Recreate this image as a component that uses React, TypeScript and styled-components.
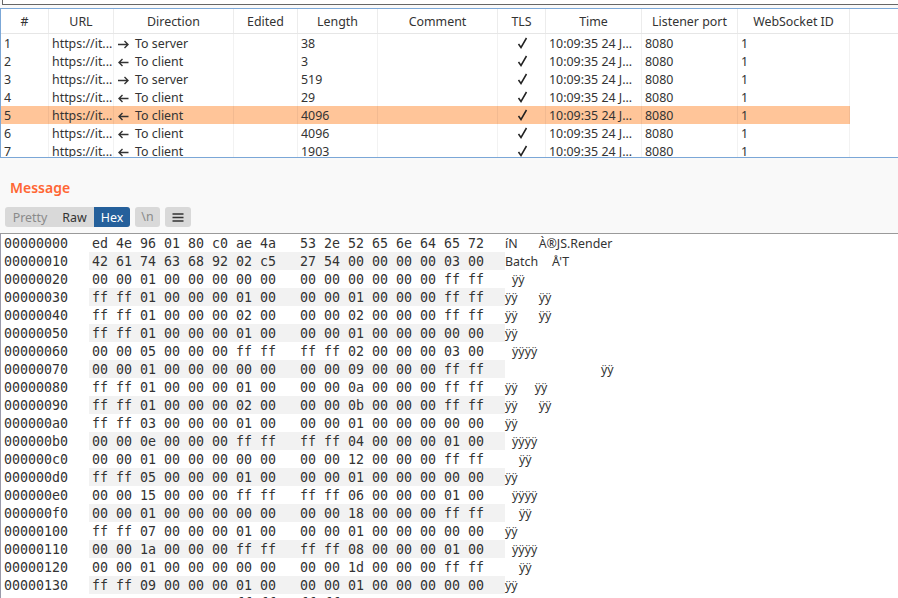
import React from "react";
import styled, { createGlobalStyle } from "styled-components";

const GlobalStyle = createGlobalStyle`
  html, body {
    margin: 0;
    padding: 0;
    background: #ffffff;
    overflow: hidden;
  }
`;

const columns = [
  { title: "#", width: 48 },
  { title: "URL", width: 65 },
  { title: "Direction", width: 120 },
  { title: "Edited", width: 64 },
  { title: "Length", width: 80 },
  { title: "Comment", width: 120 },
  { title: "TLS", width: 48 },
  { title: "Time", width: 96 },
  { title: "Listener port", width: 96 },
  { title: "WebSocket ID", width: 112 },
];

const messages = [
  { id: 1, out: true, length: 38 },
  { id: 2, out: false, length: 3 },
  { id: 3, out: true, length: 519 },
  { id: 4, out: false, length: 29 },
  { id: 5, out: false, length: 4096 },
  { id: 6, out: false, length: 4096 },
  { id: 7, out: false, length: 1903 },
];

// ascii column: [gap before the run in px, text]
type Run = [number, string];

const hexRows: [string, string, string, Run[]][] = [
  ["00000000", "ed 4e 96 01 80 c0 ae 4a", "53 2e 52 65 6e 64 65 72", [[0, "íN"], [21, "À®JS.Render"]]],
  ["00000010", "42 61 74 63 68 92 02 c5", "27 54 00 00 00 00 03 00", [[0, "Batch"], [14, "Å'T"]]],
  ["00000020", "00 00 01 00 00 00 00 00", "00 00 00 00 00 00 ff ff", [[7, "ÿÿ"]]],
  ["00000030", "ff ff 01 00 00 00 01 00", "00 00 01 00 00 00 ff ff", [[0, "ÿÿ"], [21, "ÿÿ"]]],
  ["00000040", "ff ff 01 00 00 00 02 00", "00 00 02 00 00 00 ff ff", [[0, "ÿÿ"], [21, "ÿÿ"]]],
  ["00000050", "ff ff 01 00 00 00 01 00", "00 00 01 00 00 00 00 00", [[0, "ÿÿ"]]],
  ["00000060", "00 00 05 00 00 00 ff ff", "ff ff 02 00 00 00 03 00", [[7, "ÿÿÿÿ"]]],
  ["00000070", "00 00 01 00 00 00 00 00", "00 00 09 00 00 00 ff ff", [[96, "ÿÿ"]]],
  ["00000080", "ff ff 01 00 00 00 01 00", "00 00 0a 00 00 00 ff ff", [[0, "ÿÿ"], [17, "ÿÿ"]]],
  ["00000090", "ff ff 01 00 00 00 02 00", "00 00 0b 00 00 00 ff ff", [[0, "ÿÿ"], [21, "ÿÿ"]]],
  ["000000a0", "ff ff 03 00 00 00 01 00", "00 00 01 00 00 00 00 00", [[0, "ÿÿ"]]],
  ["000000b0", "00 00 0e 00 00 00 ff ff", "ff ff 04 00 00 00 01 00", [[7, "ÿÿÿÿ"]]],
  ["000000c0", "00 00 01 00 00 00 00 00", "00 00 12 00 00 00 ff ff", [[14, "ÿÿ"]]],
  ["000000d0", "ff ff 05 00 00 00 01 00", "00 00 01 00 00 00 00 00", [[0, "ÿÿ"]]],
  ["000000e0", "00 00 15 00 00 00 ff ff", "ff ff 06 00 00 00 01 00", [[7, "ÿÿÿÿ"]]],
  ["000000f0", "00 00 01 00 00 00 00 00", "00 00 18 00 00 00 ff ff", [[14, "ÿÿ"]]],
  ["00000100", "ff ff 07 00 00 00 01 00", "00 00 01 00 00 00 00 00", [[0, "ÿÿ"]]],
  ["00000110", "00 00 1a 00 00 00 ff ff", "ff ff 08 00 00 00 01 00", [[7, "ÿÿÿÿ"]]],
  ["00000120", "00 00 01 00 00 00 00 00", "00 00 1d 00 00 00 ff ff", [[14, "ÿÿ"]]],
  ["00000130", "ff ff 09 00 00 00 01 00", "00 00 01 00 00 00 00 00", [[0, "ÿÿ"]]],
  ["00000140", "00 00 21 00 00 00 ff ff", "ff ff 0a 00 00 00 01 00", []],
];

const Page = styled.div`
  width: 898px;
  height: 598px;
  overflow: hidden;
  display: flex;
  flex-direction: column;
  background: #f9f9f9;
  font-family: "Noto Sans", sans-serif;
  font-size: 12.4px;
  color: #333333;
`;

const TopStrip = styled.div`
  height: 4px;
  margin-left: 2px;
  flex: none;
  background: #ffffff;
  border-left: 1px solid #666666;
  border-bottom: 1px solid #666666;
`;

const TablePane = styled.div`
  height: 148px;
  flex: none;
  margin-top: 3px;
  overflow: hidden;
  background: #ffffff;
  border: 1px solid #7ba7d7;
  border-right: none;
`;

const HeaderRow = styled.div`
  display: flex;
  height: 24px;
  border-bottom: 1px solid #e6e6e6;
`;

const HeaderCell = styled.div<{ $w: number }>`
  width: ${(p) => p.$w}px;
  flex: none;
  box-sizing: border-box;
  line-height: 26px;
  text-align: center;
  border-right: 1px solid #ececec;
`;

const DataRow = styled.div<{ $selected: boolean }>`
  display: flex;
  width: 849px;
  height: 18px;
  line-height: 20px;
  background: ${(p) => (p.$selected ? "#ffc599" : "transparent")};
`;

const DataCell = styled.div<{ $w: number; $center?: boolean }>`
  width: ${(p) => p.$w}px;
  flex: none;
  box-sizing: border-box;
  padding-left: ${(p) => (p.$center ? 0 : 3)}px;
  white-space: pre;
  overflow: hidden;
  text-align: ${(p) => (p.$center ? "center" : "left")};
  box-shadow: inset -1px 0 0 rgba(0, 0, 0, 0.05);
`;

const ArrowIcon = styled.svg`
  width: 12px;
  height: 9px;
  margin-right: 6px;
  vertical-align: -0.5px;
`;

const CheckIcon = styled.svg`
  width: 11px;
  height: 12px;
  vertical-align: -1px;
`;

const MessageSection = styled.div`
  height: 76px;
  flex: none;
  box-sizing: border-box;
  padding: 20px 5px 0;
  border-bottom: 1px solid #9a9a9a;
`;

const Title = styled.div`
  margin-left: 5px;
  font-size: 14px;
  line-height: 20px;
  font-weight: 600;
  color: #ff6633;
`;

const Toolbar = styled.div`
  display: flex;
  gap: 5px;
  margin-top: 9px;
`;

const ViewSwitch = styled.div`
  display: flex;
  height: 20px;
  border-radius: 3px;
  overflow: hidden;
  background: #d9d9d9;
`;

const ViewTab = styled.div<{ $state: "muted" | "plain" | "active"; $w: number }>`
  width: ${(p) => p.$w}px;
  line-height: 22px;
  text-align: center;
  color: ${(p) =>
    p.$state === "active" ? "#ffffff" : p.$state === "plain" ? "#333333" : "#8a8a8a"};
  background: ${(p) => (p.$state === "active" ? "#25609b" : "transparent")};
`;

const ToolButton = styled.div<{ $w: number; $muted?: boolean }>`
  width: ${(p) => p.$w}px;
  height: 20px;
  display: flex;
  align-items: center;
  justify-content: center;
  border-radius: 3px;
  background: #d9d9d9;
  line-height: 22px;
  color: ${(p) => (p.$muted ? "#8a8a8a" : "#333333")};
`;

const MenuIcon = styled.svg`
  width: 12px;
  height: 9px;
`;

const HexPane = styled.div`
  flex: 1;
  min-height: 0;
  overflow: hidden;
  background: #ffffff;
  border-left: 1px solid #9a9aaa;
  font-family: "DejaVu Sans Mono", monospace;
  font-size: 13.29px;
`;

const HexRow = styled.div`
  display: flex;
  height: 18px;
  line-height: 20px;
`;

const Offset = styled.div`
  width: 88px;
  flex: none;
  padding-left: 3px;
  box-sizing: border-box;
`;

const ByteStripe = styled.div<{ $odd: boolean }>`
  display: flex;
  flex: none;
  background: ${(p) => (p.$odd ? "#f2f2f2" : "transparent")};
`;

const ByteGroup = styled.div`
  display: grid;
  grid-template-columns: repeat(8, 24px);
  width: 192px;
  margin-right: 16px;
`;

const ByteCell = styled.span`
  padding-left: 3px;
`;

const AsciiCell = styled.div`
  display: flex;
  font-family: "Noto Sans", sans-serif;
  font-size: 12.4px;
  white-space: pre;
`;

const AsciiRun = styled.span<{ $gap: number }>`
  margin-left: ${(p) => p.$gap}px;
`;

const Arrow: React.FC<{ out: boolean }> = ({ out }) => (
  <ArrowIcon viewBox="0 0 12 9">
    <path
      d={out ? "M1 4.5H11M7.5 1L11 4.5L7.5 8" : "M11.5 4.5H2M5.5 1L2 4.5L5.5 8"}
      fill="none"
      stroke="#333333"
      strokeWidth="1.4"
    />
  </ArrowIcon>
);

const App: React.FC = () => (
  <Page>
    <GlobalStyle />
    <TopStrip />
    <TablePane>
      <HeaderRow>
        {columns.map((c) => (
          <HeaderCell key={c.title} $w={c.width}>
            {c.title}
          </HeaderCell>
        ))}
      </HeaderRow>
      {messages.map((m) => (
        <DataRow key={m.id} $selected={m.id === 5}>
          <DataCell $w={48}>{m.id}</DataCell>
          <DataCell $w={65}>https://it...</DataCell>
          <DataCell $w={120}>
            <Arrow out={m.out} />
            {m.out ? "To server" : "To client"}
          </DataCell>
          <DataCell $w={64} />
          <DataCell $w={80}>{m.length}</DataCell>
          <DataCell $w={120} />
          <DataCell $w={48} $center>
            <CheckIcon viewBox="0 0 11 12">
              <path d="M1.5 7L4 10.5L9.5 1" fill="none" stroke="#222222" strokeWidth="1.5" />
            </CheckIcon>
          </DataCell>
          <DataCell $w={96}>10:09:35 24 J...</DataCell>
          <DataCell $w={96}>8080</DataCell>
          <DataCell $w={112}>1</DataCell>
        </DataRow>
      ))}
    </TablePane>
    <MessageSection>
      <Title>Message</Title>
      <Toolbar>
        <ViewSwitch>
          <ViewTab $state="muted" $w={50}>Pretty</ViewTab>
          <ViewTab $state="plain" $w={39}>Raw</ViewTab>
          <ViewTab $state="active" $w={36}>Hex</ViewTab>
        </ViewSwitch>
        <ToolButton $w={25} $muted>
          \n
        </ToolButton>
        <ToolButton $w={26}>
          <MenuIcon viewBox="0 0 12 9">
            <path d="M0.5 1H11.5M0.5 4.5H11.5M0.5 8H11.5" stroke="#333333" strokeWidth="1.4" />
          </MenuIcon>
        </ToolButton>
      </Toolbar>
    </MessageSection>
    <HexPane>
      {hexRows.map((row, i) => (
        <HexRow key={row[0]}>
          <Offset>{row[0]}</Offset>
          <ByteStripe $odd={i % 2 === 1}>
            {[row[1], row[2]].map((group, g) => (
              <ByteGroup key={g}>
                {group.split(" ").map((b, n) => (
                  <ByteCell key={n}>{b}</ByteCell>
                ))}
              </ByteGroup>
            ))}
          </ByteStripe>
          <AsciiCell>
            {row[3].map(([gap, text], r) => (
              <AsciiRun key={r} $gap={gap}>
                {text}
              </AsciiRun>
            ))}
          </AsciiCell>
        </HexRow>
      ))}
    </HexPane>
  </Page>
);

export default App;
